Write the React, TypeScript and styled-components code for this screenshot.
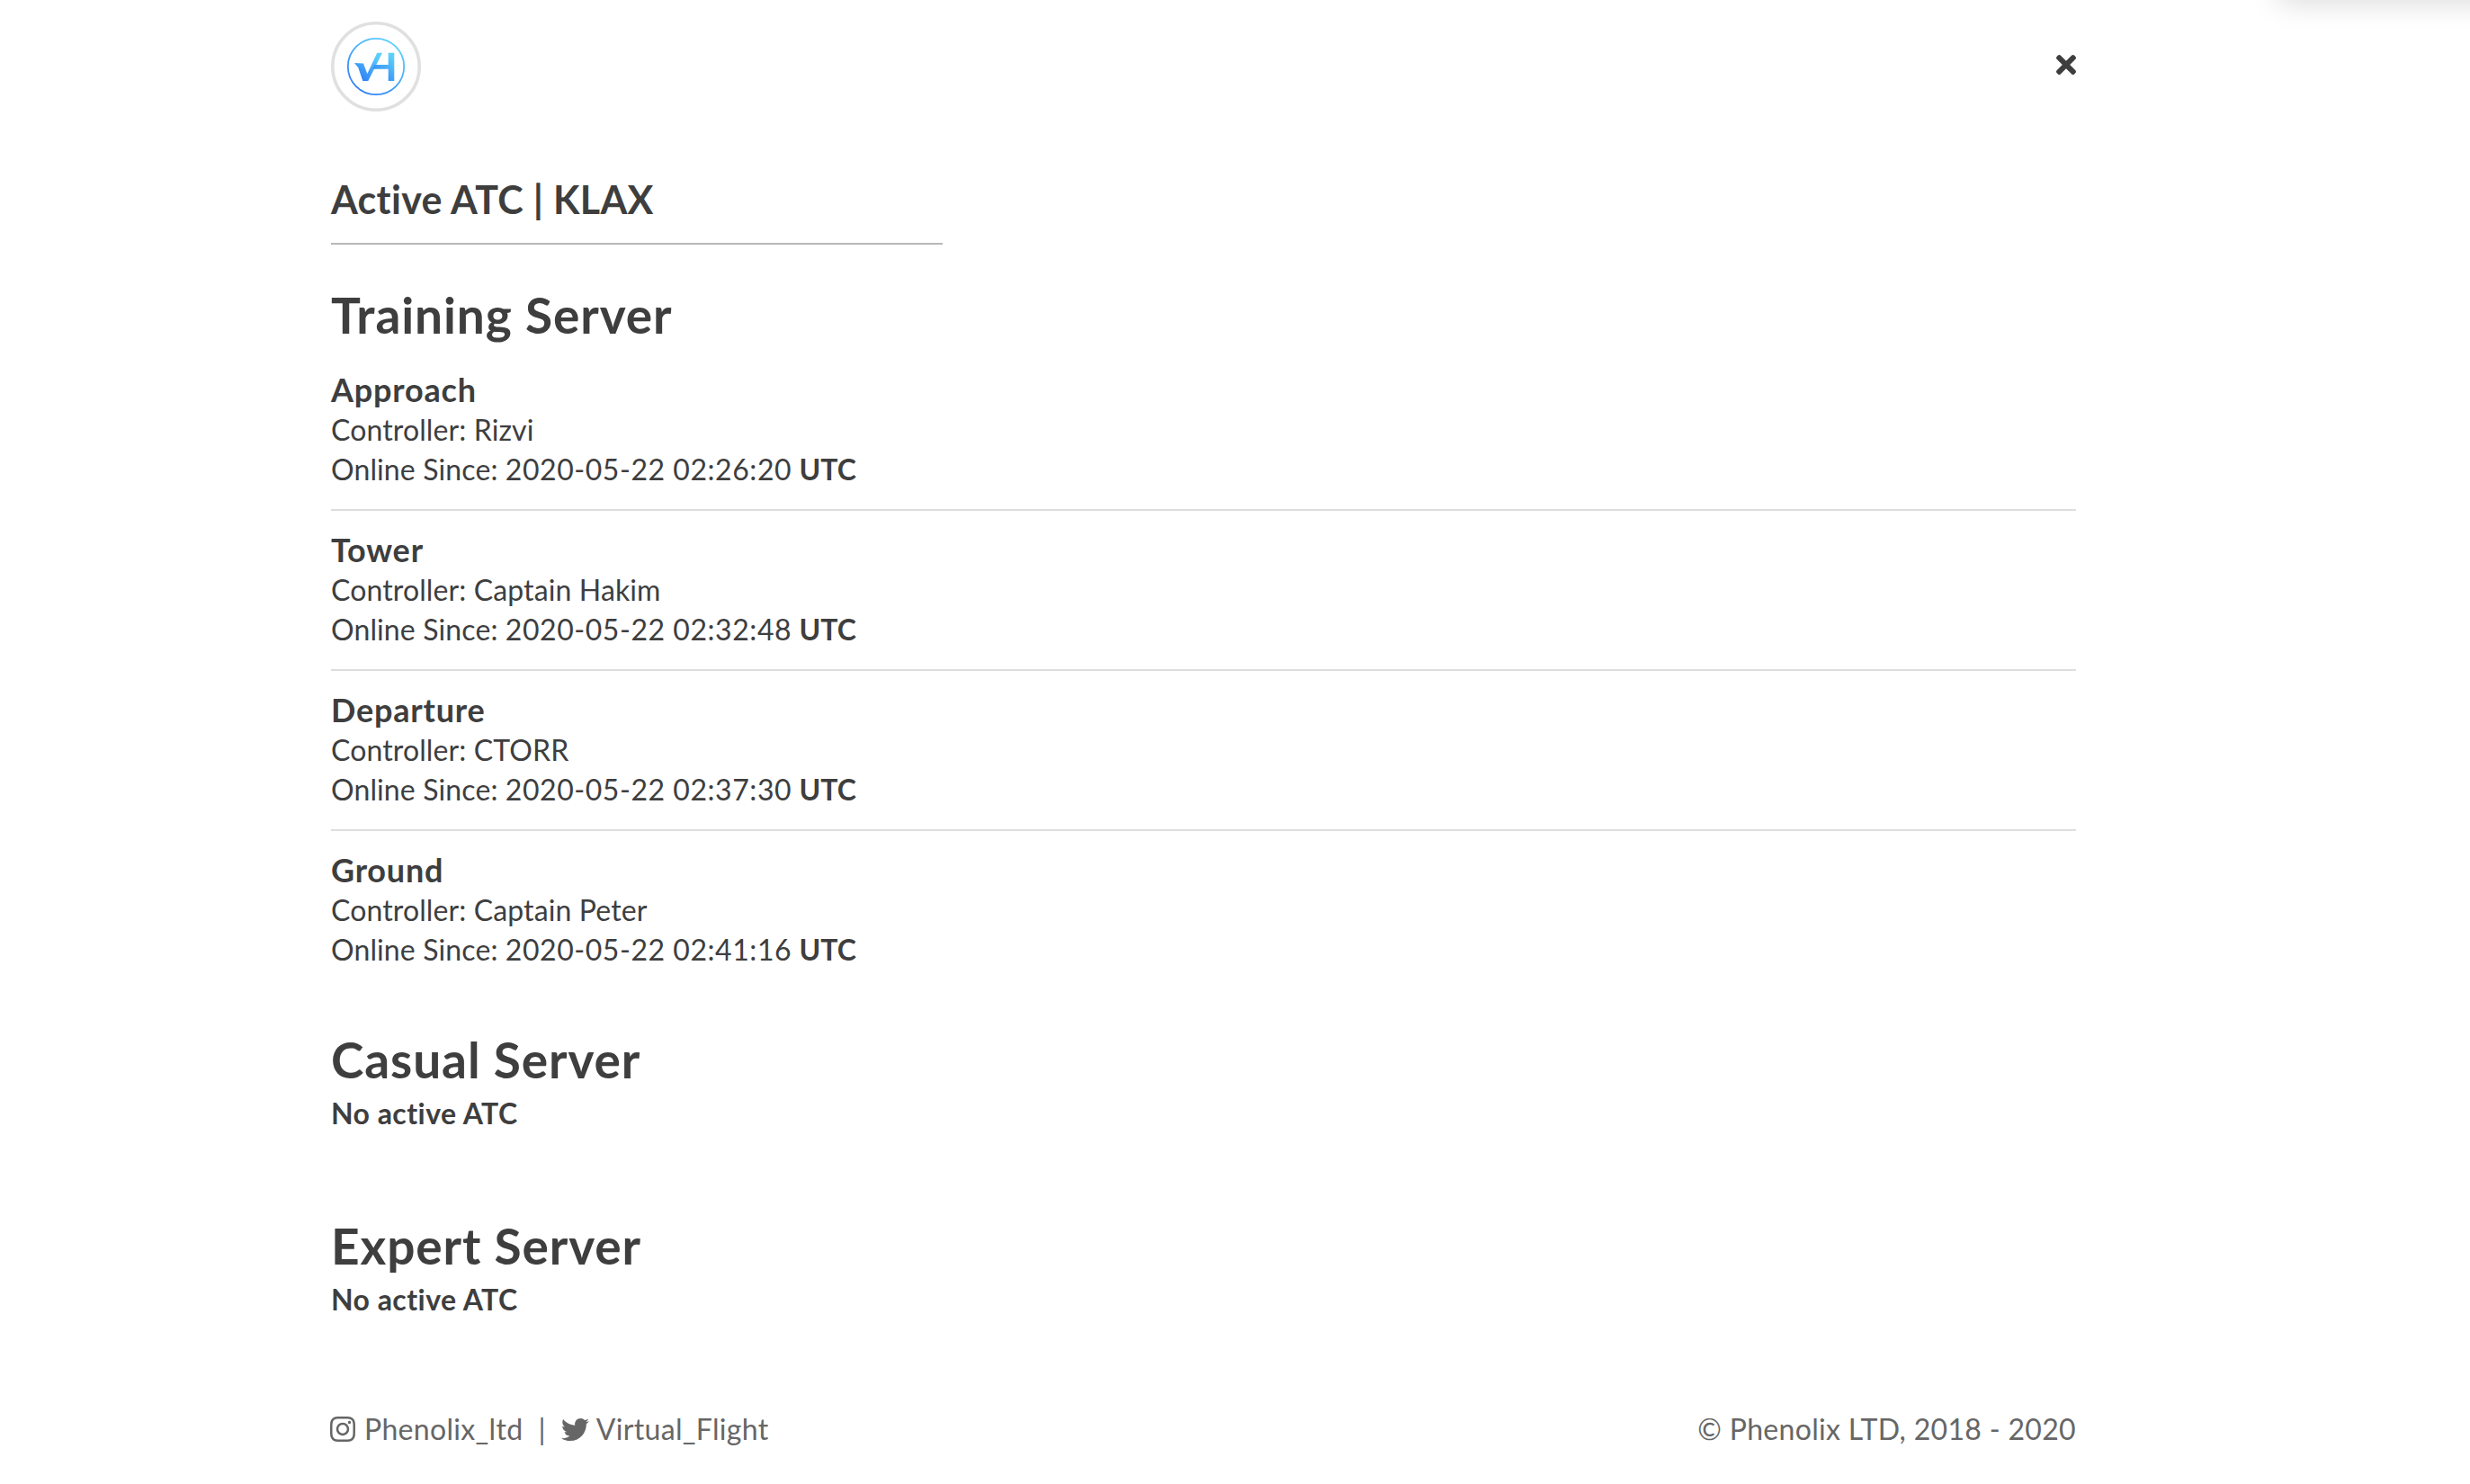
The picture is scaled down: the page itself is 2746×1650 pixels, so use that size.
import styled, { createGlobalStyle } from "styled-components"
import { FaInstagram, FaTimes, FaTwitter } from "react-icons/fa"

const GlobalStyle = createGlobalStyle`
  * { box-sizing: border-box; }
  html, body { margin: 0; padding: 0; background: #fff; overflow: hidden; }
  body {
    font-family: "Lato", "Noto Sans", sans-serif;
    color: #3e3e3e;
  }
`

const Page = styled.div`
  width: 1940px;
  height: 1650px;
  margin-left: 368px;
  display: flex;
  flex-direction: column;
`

const CornerShadow = styled.div`
  position: fixed;
  top: -30px;
  right: -40px;
  width: 252px;
  height: 30px;
  box-shadow: 0 0 34px rgba(0, 0, 0, 0.18);
`

const TopBar = styled.header`
  height: 100px;
  margin-top: 24px;
  display: flex;
  justify-content: space-between;
  align-items: center;
`

const Close = styled.div`
  display: flex;
  margin-top: -4px;
  margin-right: -5px;
  color: #3e3e3e;
  font-size: 32px;
`

const PageTitle = styled.h1`
  width: 680px;
  margin: 66px 0 0;
  height: 82px;
  font-size: 43px;
  line-height: 64px;
  font-weight: 700;
  letter-spacing: 0.3px;
  border-bottom: 2px solid #b8b8b8;
`

const Section = styled.section<{ $gap: number }>`
  margin-top: ${(p) => p.$gap}px;
`

const ServerName = styled.h2`
  margin: 0;
  font-size: 55px;
  line-height: 64px;
  font-weight: 700;
  letter-spacing: 0.9px;
`

const Entries = styled.div`
  margin-top: 8px;
`

const Entry = styled.div<{ $last?: boolean }>`
  padding-top: 20px;
  padding-bottom: ${(p) => (p.$last ? 0 : 22)}px;
  border-bottom: ${(p) => (p.$last ? "none" : "2px solid #dedede")};
`

const Station = styled.div`
  font-size: 36px;
  line-height: 46px;
  font-weight: 700;
  letter-spacing: 0.8px;
`

const Line = styled.div`
  font-size: 32px;
  line-height: 44px;
  letter-spacing: 0.12px;
  white-space: nowrap;
`

const Stamp = styled.span`
  letter-spacing: 0.55px;
`

const Empty = styled.div`
  margin-top: 6px;
  font-size: 32px;
  line-height: 44px;
  font-weight: 700;
  letter-spacing: 0.45px;
`

const Footer = styled.footer`
  margin-top: 100px;
  display: flex;
  justify-content: space-between;
  align-items: center;
  font-size: 32px;
  line-height: 44px;
  letter-spacing: 0.32px;
  color: #666;
`

const Socials = styled.div`
  display: flex;
  align-items: center;
  gap: 8px;
  margin-left: -3px;
  svg { display: block; font-size: 32px; }
`

const Sep = styled.span`
  margin: 0 9px;
`

const Bird = styled(FaTwitter)`
  && { font-size: 31px; }
`

function Logo() {
  return (
    <svg width="100" height="100" viewBox="0 0 100 100">
      <defs>
        <linearGradient id="vh" x1="0.85" y1="0.1" x2="0.25" y2="0.95">
          <stop offset="0" stopColor="#5cd0fb" />
          <stop offset="1" stopColor="#3182f6" />
        </linearGradient>
      </defs>
      <circle cx="50" cy="50" r="48.2" fill="#fff" stroke="#e0e0e0" strokeWidth="3.6" />
      <circle cx="50" cy="50" r="31.2" fill="none" stroke="url(#vh)" strokeWidth="1.8" />
      <path
        d="M26 46 L36 46.500 L40.300 58 L51.300 34.700 H57 L41.300 66 H35.300 L30.300 51.300 Z"
        fill="url(#vh)"
      />
      <path d="M48 48 H63.700 V34.700 H70.300 V66 H63.700 V52.700 H46 Z" fill="url(#vh)" />
    </svg>
  )
}

const stations = [
  { name: "Approach", controller: "Rizvi", since: "2020-05-22 02:26:20" },
  { name: "Tower", controller: "Captain Hakim", since: "2020-05-22 02:32:48" },
  { name: "Departure", controller: "CTORR", since: "2020-05-22 02:37:30" },
  { name: "Ground", controller: "Captain Peter", since: "2020-05-22 02:41:16" },
]

function App() {
  return (
    <>
      <GlobalStyle />
      <CornerShadow />
      <Page>
        <TopBar>
          <Logo />
          <Close>
            <FaTimes />
          </Close>
        </TopBar>
        <PageTitle>Active ATC | KLAX</PageTitle>
        <Section $gap={46}>
          <ServerName>Training Server</ServerName>
          <Entries>
            {stations.map((s, i) => (
              <Entry key={s.name} $last={i === stations.length - 1}>
                <Station>{s.name}</Station>
                <Line>Controller: {s.controller}</Line>
                <Line>
                  Online Since: <Stamp>{s.since}</Stamp> <b>UTC</b>
                </Line>
              </Entry>
            ))}
          </Entries>
        </Section>
        <Section $gap={68}>
          <ServerName>Casual Server</ServerName>
          <Empty>No active ATC</Empty>
        </Section>
        <Section $gap={93}>
          <ServerName>Expert Server</ServerName>
          <Empty>No active ATC</Empty>
        </Section>
        <Footer>
          <Socials>
            <FaInstagram />
            <span>Phenolix_ltd</span>
            <Sep>|</Sep>
            <Bird />
            <span>Virtual_Flight</span>
          </Socials>
          <div>© Phenolix LTD, 2018 - 2020</div>
        </Footer>
      </Page>
    </>
  )
}

export default App
